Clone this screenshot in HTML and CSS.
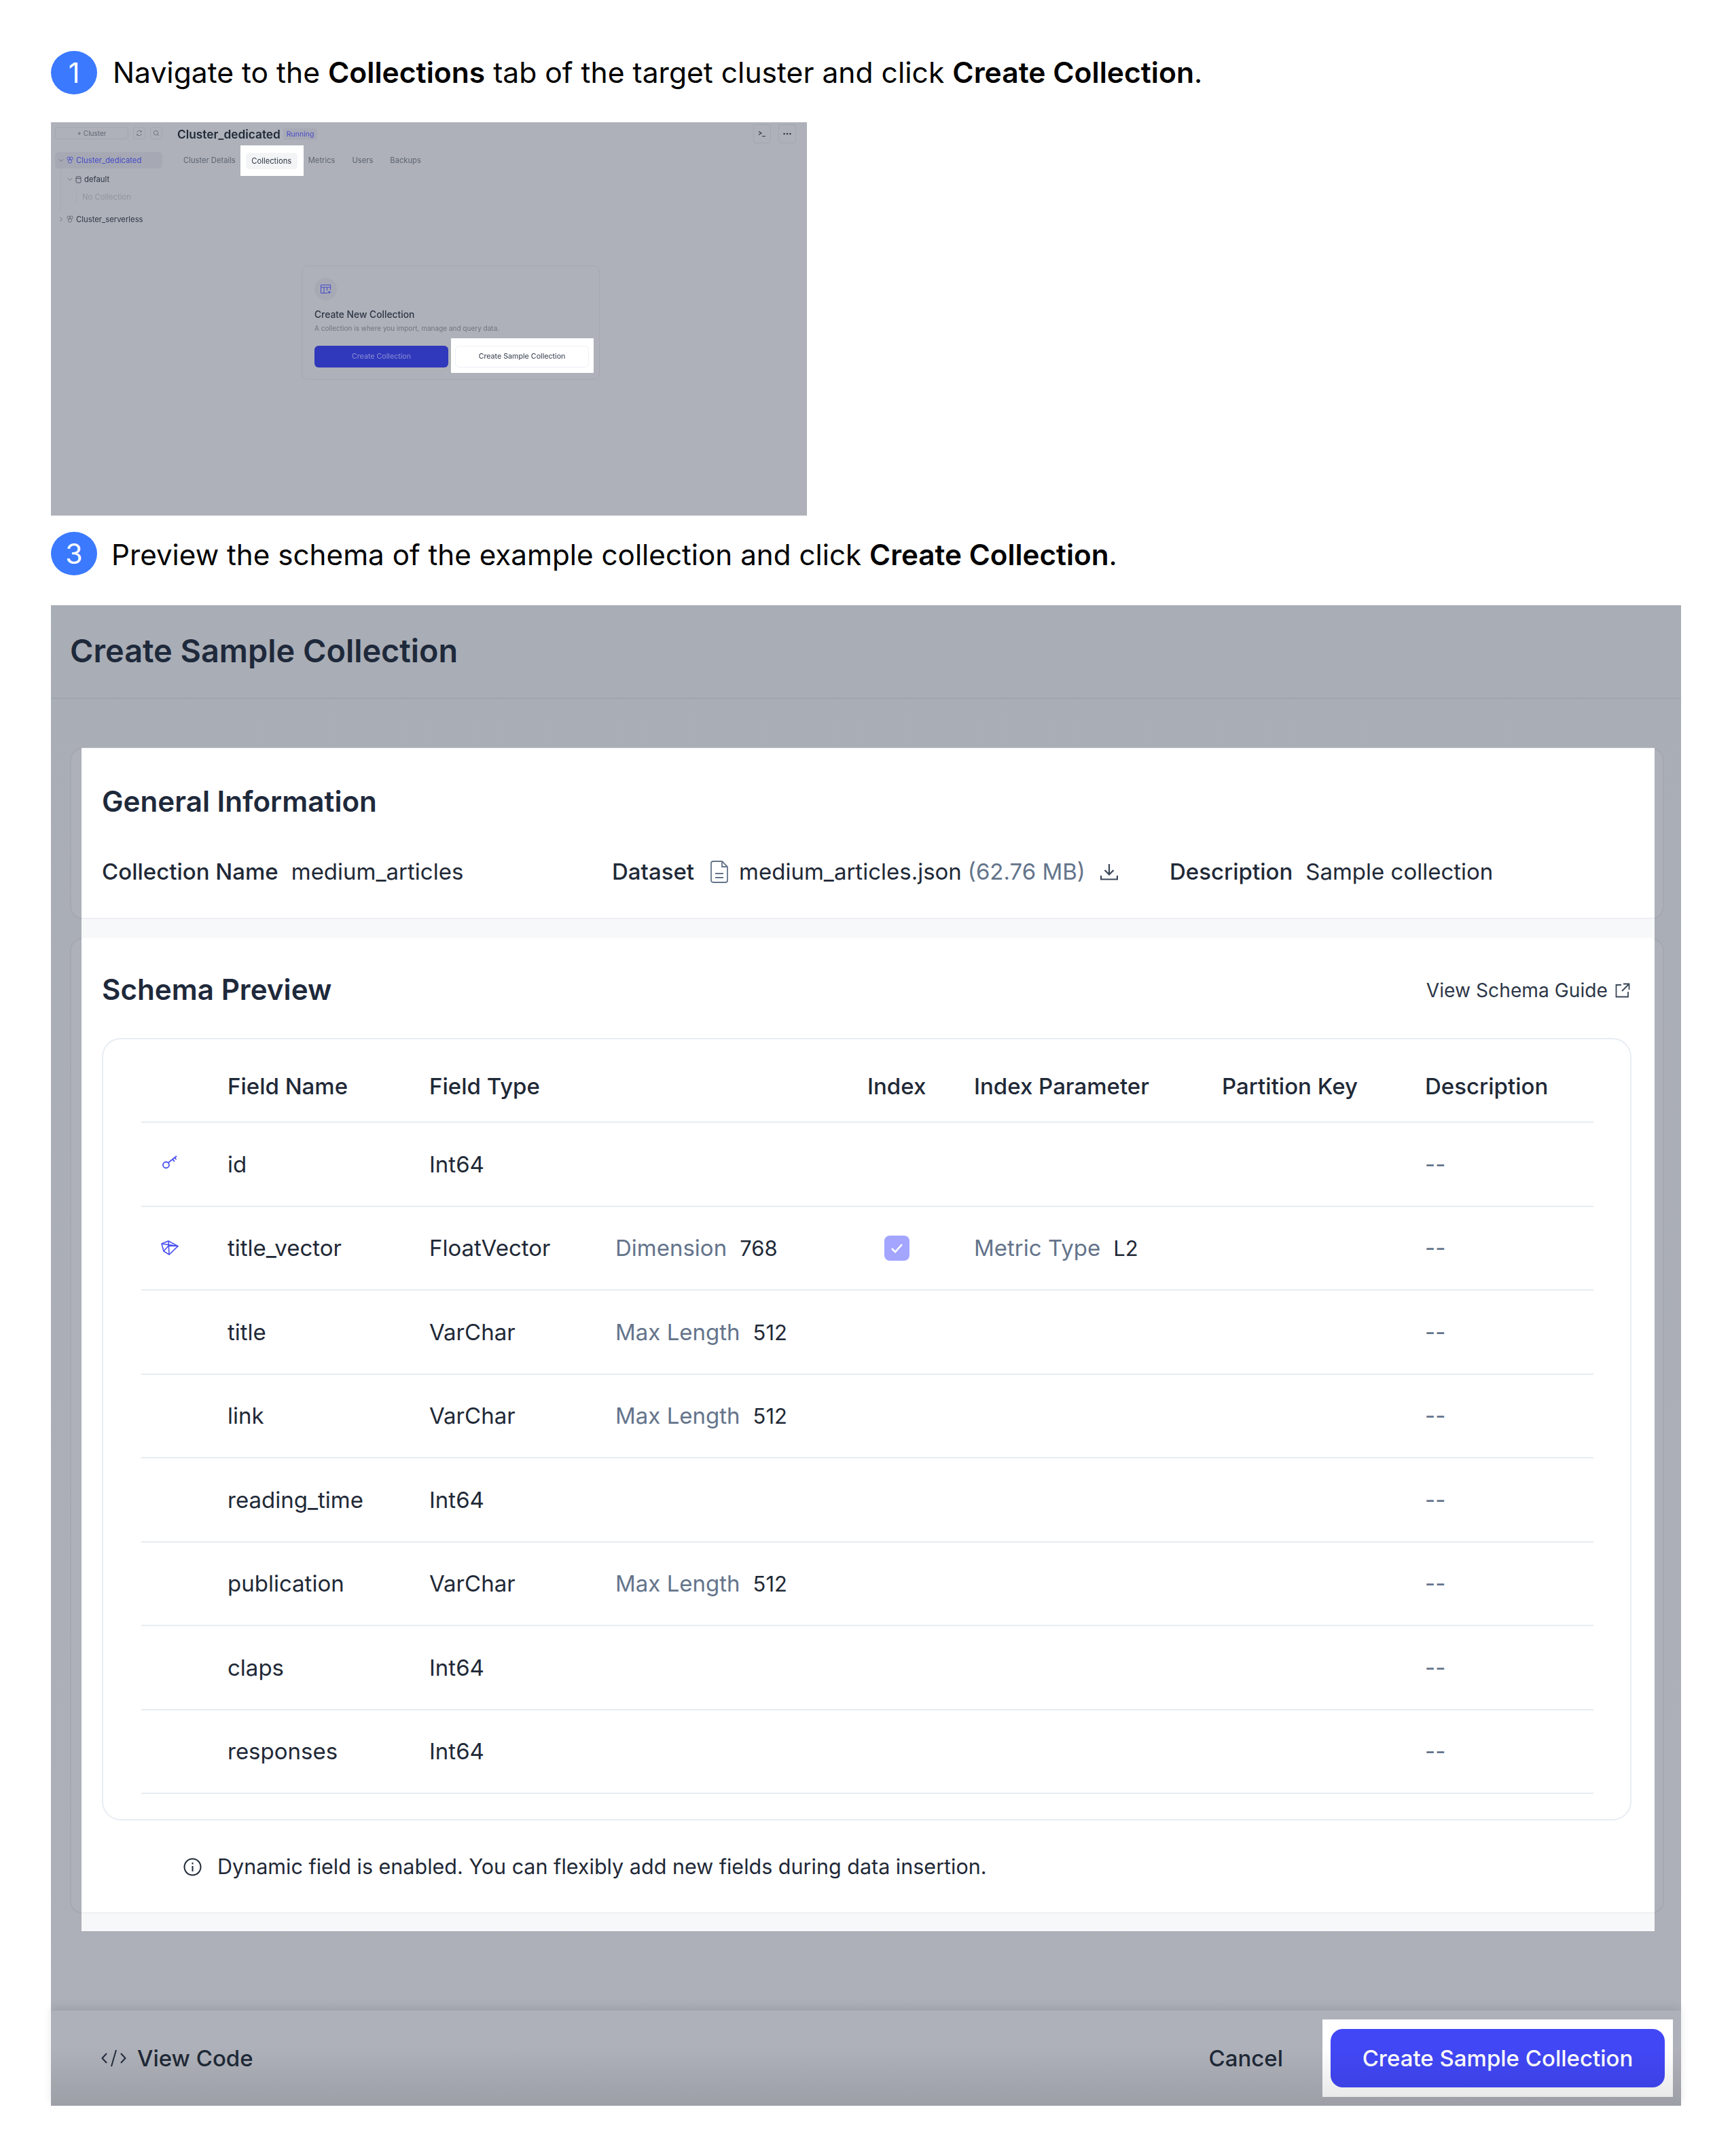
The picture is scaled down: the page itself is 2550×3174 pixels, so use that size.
FILE: index.html
```html
<!DOCTYPE html>
<html lang="en">
  <head>
    <meta charset="UTF-8" />
    <title>Create Sample Collection</title>
    <link rel="stylesheet" href="styles.css">
  </head>

  <body>
    <div class="step step-first">
      <div class="step-num">1</div>
      <p class="step-text step-text-first">Navigate to the <b>Collections</b> tab of the target cluster and click <b>Create Collection</b>.</p>
    </div>

    <div class="shot-small">
      <div class="mini-side">
        <div class="mini-tools">
          <div class="mini-btn mini-add">+ Cluster</div>
          <div class="mini-btn mini-square">
            <svg width="10" height="10" viewBox="0 0 10 10" fill="none" stroke="#5d6472" stroke-width="0.8"><path d="M1.5 4A3.6 3.6 0 0 1 8 3M8.5 6A3.6 3.6 0 0 1 2 7" /><path d="M8.3 1.2V3.2H6.4M1.7 8.8V6.8H3.6" /></svg>
          </div>
          <div class="mini-btn mini-square">
            <svg width="10" height="10" viewBox="0 0 10 10" fill="none" stroke="#5d6472" stroke-width="0.8"><circle cx="4.6" cy="4.6" r="3.2" /><path d="M7 7L8.8 8.8" /></svg>
          </div>
        </div>
        <div class="tree-item tree-active">
          <svg class="tree-chev" width="8" height="8" viewBox="0 0 8 8" fill="none" stroke="#5d6472" stroke-width="0.8"><path d="M1 2.5L4 5.5L7 2.5" /></svg>
          <svg width="10" height="12" viewBox="0 0 10 12" fill="none" stroke="#4549c8" stroke-width="0.8"><circle cx="3" cy="3.2" r="2.2" /><circle cx="7" cy="3.2" r="2.2" /><circle cx="5" cy="7.6" r="2.6" /></svg>
          <span>Cluster_dedicated</span>
        </div>
        <div class="tree-sub">
          <div class="tree-item tree-db">
            <svg class="tree-chev" width="8" height="8" viewBox="0 0 8 8" fill="none" stroke="#5d6472" stroke-width="0.8"><path d="M1 2.5L4 5.5L7 2.5" /></svg>
            <svg width="9" height="11" viewBox="0 0 9 11" fill="none" stroke="#333b4b" stroke-width="0.8"><rect x="1" y="1" width="7" height="9" rx="1.5" /><path d="M1 3.6H8" /></svg>
            <span>default</span>
          </div>
          <div class="tree-empty">No Collection</div>
        </div>
        <div class="tree-item">
          <svg class="tree-chev" width="8" height="8" viewBox="0 0 8 8" fill="none" stroke="#5d6472" stroke-width="0.8"><path d="M2.5 1L5.5 4L2.5 7" /></svg>
          <svg width="10" height="12" viewBox="0 0 10 12" fill="none" stroke="#5d6472" stroke-width="0.8"><circle cx="3" cy="3.2" r="2.2" /><circle cx="7" cy="3.2" r="2.2" /><circle cx="5" cy="7.6" r="2.6" /></svg>
          <span>Cluster_serverless</span>
        </div>
      </div>

      <div class="mini-main">
        <div class="mini-head">
          <span class="mini-title">Cluster_dedicated</span>
          <span class="mini-badge">Running</span>
          <div class="mini-head-btns">
            <div class="mini-btn mini-head-btn">
              <svg width="12" height="10" viewBox="0 0 12 10" fill="none" stroke="#2d3545" stroke-width="1.1"><path d="M1 1.5L5 4L1 6.5M6 8.5H11" /></svg>
            </div>
            <div class="mini-btn mini-head-btn">
              <svg width="12" height="4" viewBox="0 0 12 4" fill="#2d3545"><circle cx="1.6" cy="2" r="1.3" /><circle cx="6" cy="2" r="1.3" /><circle cx="10.4" cy="2" r="1.3" /></svg>
            </div>
          </div>
        </div>
        <div class="mini-tabs">
          <span class="mini-tab">Cluster Details</span>
          <div class="mini-tab-mark"><span class="mini-tab-on">Collections</span></div>
          <span class="mini-tab">Metrics</span>
          <span class="mini-tab">Users</span>
          <span class="mini-tab">Backups</span>
        </div>
        <div class="new-card">
          <div class="new-icon">
            <svg width="16" height="14" viewBox="0 0 16 14" fill="none" stroke="#4549c8" stroke-width="1"><path d="M10 12.5H0.5V0.5H14.5V8M0.5 4H14.5M5 4V12.5M9.5 4V9" /><path d="M12.5 9V13.5M10 11.3H15.5" /></svg>
          </div>
          <div class="new-title">Create New Collection</div>
          <div class="new-desc">A collection is where you import, manage and query data.</div>
          <div class="new-actions">
            <div class="new-btn new-btn-main">Create Collection</div>
            <div class="new-mark"><div class="new-btn new-btn-sample">Create Sample Collection</div></div>
          </div>
        </div>
      </div>
    </div>

    <div class="step step-third">
      <div class="step-num">3</div>
      <p class="step-text step-text-third">Preview the schema of the example collection and click <b>Create Collection</b>.</p>
    </div>

    <div class="modal">
      <div class="modal-head">Create Sample Collection</div>

      <div class="modal-body">
        <div class="panel">
          <section class="section section-info">
            <h2>General Information</h2>
            <div class="info-row">
              <div class="info-item"><b>Collection Name</b><span>medium_articles</span></div>
              <div class="info-item">
                <b>Dataset</b>
                <svg class="file-icon" width="26" height="33" viewBox="0 0 26 33" fill="none" stroke="#64748b" stroke-width="1.8"><path d="M4 1H17L25 9V29A3 3 0 0 1 22 32H4A3 3 0 0 1 1 29V4A3 3 0 0 1 4 1Z" /><path d="M17 1V9H25M7 19H19M7 25H19" /></svg>
                <span class="file-name">medium_articles.json</span>
                <span class="file-size">(62.76 MB)</span>
                <svg class="down-icon" width="26" height="25" viewBox="0 0 26 25" fill="none" stroke="#3a4557" stroke-width="2.2"><path d="M13 1V16M6.5 10L13 16.5L19.500 10M1 18V23.500H25V18" /></svg>
              </div>
              <div class="info-item"><b>Description</b><span>Sample collection</span></div>
            </div>
          </section>

          <section class="section section-schema">
            <div class="schema-head">
              <h2>Schema Preview</h2>
              <div class="guide-link">
                View Schema Guide
                <svg width="22" height="22" viewBox="0 0 22 22" fill="none" stroke="#3a4557" stroke-width="1.8"><path d="M9 3H1.500V20.500H19V13" /><path d="M12 1.500H20.500V10M20 2L10 12" /></svg>
              </div>
            </div>

            <div class="table-box">
              <div class="row row-head">
                <span></span><span>Field Name</span><span>Field Type</span><span></span><span>Index</span><span>Index Parameter</span><span>Partition Key</span><span>Description</span>
              </div>
              <div class="row">
                <span class="row-icon">
                  <svg width="22" height="20" viewBox="0 0 22 20" fill="none" stroke="#4a50f0" stroke-width="1.800"><circle cx="5.500" cy="14" r="4.500" /><path d="M9 10.500L21 1M15 5.500L18 9M18 3L20.500 6" /></svg>
                </span>
                <span>id</span><span>Int64</span><span></span><span></span><span></span><span></span><span class="muted">--</span>
              </div>
              <div class="row">
                <span class="row-icon row-icon-vec">
                  <svg width="26" height="22" viewBox="0 0 26 22" fill="none" stroke="#4a50f0" stroke-width="1.600"><path d="M11 1L25 8.500L12 21L4 16L1 5Z" /><path d="M11 1L12 21M1 5L25 8.500M4 16L11 8L25 8.500" /></svg>
                </span>
                <span>title_vector</span><span>FloatVector</span>
                <span class="param"><em>Dimension</em>768</span>
                <span><span class="check"><svg width="19" height="15" viewBox="0 0 19 15" fill="none" stroke="#fff" stroke-width="2.600"><path d="M2 8L7 13L17 2" /></svg></span></span>
                <span class="param"><em>Metric Type</em>L2</span>
                <span></span><span class="muted">--</span>
              </div>
              <div class="row">
                <span></span><span>title</span><span>VarChar</span>
                <span class="param"><em>Max Length</em>512</span>
                <span></span><span></span><span></span><span class="muted">--</span>
              </div>
              <div class="row">
                <span></span><span>link</span><span>VarChar</span>
                <span class="param"><em>Max Length</em>512</span>
                <span></span><span></span><span></span><span class="muted">--</span>
              </div>
              <div class="row">
                <span></span><span>reading_time</span><span>Int64</span><span></span><span></span><span></span><span></span><span class="muted">--</span>
              </div>
              <div class="row">
                <span></span><span>publication</span><span>VarChar</span>
                <span class="param"><em>Max Length</em>512</span>
                <span></span><span></span><span></span><span class="muted">--</span>
              </div>
              <div class="row">
                <span></span><span>claps</span><span>Int64</span><span></span><span></span><span></span><span></span><span class="muted">--</span>
              </div>
              <div class="row">
                <span></span><span>responses</span><span>Int64</span><span></span><span></span><span></span><span></span><span class="muted">--</span>
              </div>
            </div>

            <div class="dynamic-note">
              <svg width="27" height="27" viewBox="0 0 27 27" fill="none" stroke="#1f2937" stroke-width="2"><circle cx="13.500" cy="13.500" r="12" /><path d="M13.500 12V20M13.500 7V9.500" /></svg>
              Dynamic field is enabled. You can flexibly add new fields during data insertion.
            </div>
          </section>
        </div>
      </div>

      <div class="modal-foot">
        <div class="code-link">
          <svg width="37" height="26" viewBox="0 0 37 26" fill="none" stroke="#232c3c" stroke-width="2"><path d="M8 6L1.500 13L8 20M29 6L35.500 13L29 20M22 1L15 25" /></svg>
          View Code
        </div>
        <div class="foot-cancel">Cancel</div>
        <div class="foot-mark"><div class="foot-create">Create Sample Collection</div></div>
      </div>
    </div>
  </body>
</html>
```

FILE: styles.css
```css
html {
  box-sizing: border-box;
  font-family: Inter, "Liberation Sans", sans-serif;
}
*,
*:before,
*:after {
  box-sizing: inherit;
}

body {
  margin: 0;
  padding: 75px 0 74px 75px;
  background: #fff;
  color: #000;
}

/* step headings */
.step {
  display: flex;
  align-items: center;
  height: 64px;
}

.step-first {
  margin-bottom: 41px;
}

.step-third {
  margin-top: 24px;
  margin-bottom: 44px;
}

.step-num {
  width: 68px;
  height: 64px;
  border-radius: 50%;
  background: #3b79ff;
  color: #fff;
  font-size: 41px;
  line-height: 64px;
  text-align: center;
}

.step-text {
  margin: 0;
  font-size: 42.600px;
  line-height: 64px;
  white-space: nowrap;
}

.step-text-first {
  margin-left: 23px;
}

.step-text-third {
  margin: 3px 0 0 21px;
  font-size: 42.200px;
}

.step-text b {
  font-weight: 600;
}

/* small dimmed screenshot */
.shot-small {
  display: flex;
  width: 1113px;
  height: 579px;
  background: #aeb1b9;
  color: #2d3545;
  filter: blur(0.35px);
}

.mini-side {
  width: 186px;
  padding: 7px 0 0 6px;
  font-size: 11.300px;
}

.mini-tools {
  display: flex;
  gap: 7px;
  margin-bottom: 19px;
}

.mini-btn {
  display: flex;
  align-items: center;
  justify-content: center;
  height: 18px;
  border: 1px solid #a4a7b0;
  border-radius: 4px;
  color: #5d6472;
}

.mini-add {
  width: 108px;
  font-size: 10px;
}

.mini-square {
  width: 18px;
}

.tree-item {
  display: flex;
  align-items: center;
  gap: 4px;
  height: 24px;
  padding-left: 5px;
}

.tree-active {
  width: 158px;
  border-radius: 5px;
  background: #a6a9b3;
  color: #4549c8;
}

.tree-sub {
  height: 63px;
  margin-left: 8px;
  border-left: 1px solid #a6a9b3;
}

.tree-db {
  height: 32px;
  padding-left: 9px;
}

.tree-empty {
  height: 20px;
  margin-left: 22px;
  padding-left: 8px;
  border-left: 1px solid #a6a9b3;
  color: #92959f;
  line-height: 20px;
}

.mini-main {
  flex: 1;
  padding-top: 3px;
}

.mini-head {
  display: flex;
  align-items: center;
  height: 28px;
  padding-right: 16px;
}

.mini-title {
  font-size: 17.300px;
  font-weight: 600;
  color: #1f2937;
}

.mini-badge {
  margin-left: 4px;
  padding: 2px 5px;
  border-radius: 3px;
  background: #a7aab5;
  color: #4549c8;
  font-size: 10.500px;
}

.mini-head-btns {
  display: flex;
  gap: 11px;
  margin-left: auto;
}

.mini-head-btn {
  width: 26px;
  height: 28px;
}

.mini-tabs {
  display: flex;
  align-items: center;
  height: 24px;
  margin-top: 13px;
  padding-left: 9px;
  font-size: 11.200px;
  color: #5d6472;
}

.mini-tab {
  margin-right: 25px;
}

.mini-tab:first-child {
  margin-right: 7px;
}

.mini-tab-mark {
  flex: none;
  margin-right: 7px;
  padding: 11px 9px 10px 8px;
  background: #fff;
}

.mini-tab-on {
  display: block;
  width: 76px;
  border-radius: 5px;
  background: #f3f4f6;
  color: #2d3545;
  line-height: 24px;
  text-align: center;
}

.new-card {
  width: 439px;
  height: 168px;
  margin: 143px 0 0 183px;
  padding: 17px 0 0 18px;
  border: 1px solid #a5a8b1;
  border-radius: 9px;
}

.new-icon {
  display: flex;
  align-items: center;
  justify-content: center;
  width: 33px;
  height: 33px;
  border-radius: 50%;
  background: #a7aab5;
}

.new-title {
  margin-top: 12px;
  font-size: 13.800px;
  font-weight: 500;
  line-height: 18px;
  color: #2d3545;
}

.new-desc {
  margin-top: 3px;
  font-size: 10px;
  line-height: 16px;
  color: #6f7480;
}

.new-actions {
  display: flex;
  align-items: flex-start;
  gap: 4px;
  margin-top: 18px;
}

.new-btn {
  width: 197px;
  height: 32px;
  border-radius: 6px;
  font-size: 10.700px;
  line-height: 32px;
  text-align: center;
}

.new-btn-main {
  background: #3038bb;
  color: #8d92d8;
}

.new-mark {
  margin-top: -11px;
  padding: 11px 7px 8px 6px;
  background: #fff;
}

.new-btn-sample {
  border: 1px solid #eef0f5;
  line-height: 30px;
  color: #2d3545;
}

/* big dimmed dialog */
.modal {
  width: 2400px;
  background: linear-gradient(#a9adb5, #adb0b8);
  color: #1f2937;
}

.modal-head {
  height: 138px;
  padding-left: 28px;
  border-bottom: 2px solid #a1a5ae;
  font-size: 46.800px;
  font-weight: 600;
  line-height: 134px;
  color: #1e293b;
}

.modal-body {
  position: relative;
  height: 1931px;
  padding: 72px 39px 0 45px;
}

.modal-body:before,
.modal-body:after {
  content: "";
  position: absolute;
  left: 28px;
  width: 2347px;
  border: 2px solid #a5a8b1;
  border-radius: 18px;
  background: #aeb1b9;
}

.modal-body:before {
  top: 72px;
  height: 252px;
}

.modal-body:after {
  top: 352px;
  height: 1436px;
}

.panel {
  position: relative;
  z-index: 1;
  width: 2316px;
  height: 1742px;
  padding-top: 2px;
  background: #f7f8fa;
}

.section {
  padding-left: 30px;
  background: #fff;
  border-bottom: 2px solid #eef0f3;
}

.section h2 {
  margin: 0;
  font-size: 42.200px;
  font-weight: 600;
  line-height: 52px;
  color: #1e293b;
}

.section-info {
  height: 250px;
  padding-top: 51px;
}

.info-row {
  display: grid;
  grid-template-columns: 751px 821px 1fr;
  margin-top: 55px;
  font-size: 33px;
  line-height: 44px;
}

.info-item {
  display: flex;
  align-items: center;
  gap: 19px;
}

.info-item b {
  font-weight: 500;
}

.file-icon {
  margin-left: 5px;
}

.file-name {
  margin-left: -3px;
}

.file-size {
  margin-left: -10px;
  color: #64748b;
}

.down-icon {
  margin-left: 3px;
}

.section-schema {
  height: 1436px;
  margin-top: 28px;
  padding-top: 50px;
}

.schema-head {
  display: flex;
  align-items: center;
  justify-content: space-between;
  padding-right: 36px;
}

.guide-link {
  display: flex;
  align-items: center;
  gap: 11px;
  padding-top: 2px;
  font-size: 28.200px;
  color: #2d3748;
}

.table-box {
  width: 2252px;
  height: 1152px;
  margin-top: 45px;
  padding: 0 54px 0 56px;
  border: 2px solid #e8ecf3;
  border-radius: 28px;
}

.row {
  display: grid;
  grid-template-columns: 127px 297px 274px 371px 157px 365px 299px 1fr;
  align-items: center;
  height: 123.500px;
  border-bottom: 2px solid #e8ecf3;
  font-size: 33px;
}

.row-head {
  height: 123px;
  padding-top: 16px;
  font-weight: 500;
}

.row-icon {
  display: flex;
  padding: 0 0 6px 31px;
}

.row-icon-vec {
  padding: 0 0 0 29px;
}

.param {
  display: flex;
  align-items: baseline;
  gap: 19px;
  font-size: 31px;
}

.param em {
  font-size: 33px;
  font-style: normal;
  color: #64748b;
}

.check {
  display: flex;
  align-items: center;
  justify-content: center;
  width: 37px;
  height: 37px;
  margin-left: 25px;
  border-radius: 8px;
  background: #a3a5ff;
}

.muted {
  color: #64748b;
}

.dynamic-note {
  display: flex;
  align-items: center;
  gap: 23px;
  margin-top: 48px;
  padding-left: 120px;
  font-size: 30.500px;
  line-height: 40px;
}

.modal-foot {
  position: relative;
  display: flex;
  align-items: center;
  height: 140px;
  padding: 0 12px 0 74px;
  background: #aeb1b9;
  box-shadow: 0 -5px 12px rgba(0, 0, 0, 0.09);
  font-size: 33px;
  font-weight: 500;
  z-index: 2;
}

.modal-foot:after {
  content: "";
  position: absolute;
  inset: 0;
  background: linear-gradient(rgba(0, 0, 0, 0) 38%, rgba(0, 0, 0, 0.1));
}

.code-link {
  display: flex;
  align-items: center;
  gap: 16px;
}

.foot-cancel {
  margin-left: auto;
  margin-right: 58px;
}

.foot-mark {
  padding: 14px 12px;
  background: #fff;
}

.foot-create {
  width: 492px;
  height: 86px;
  border-radius: 18px;
  background: #4147f5;
  color: #fff;
  line-height: 86px;
  text-align: center;
}
```
